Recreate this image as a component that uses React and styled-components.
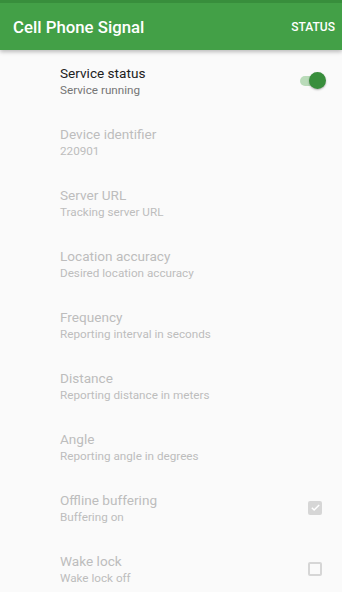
import React from "react";
import styled, { createGlobalStyle } from "styled-components";

const Global = createGlobalStyle`
  html, body { margin: 0; padding: 0; background: #fafafa; }
  body { font-family: Roboto, "Noto Sans", sans-serif; overflow: hidden; }
`;

const Screen = styled.div`
  width: 342px;
  height: 592px;
  background: #fafafa;
  display: flex;
  flex-direction: column;
  overflow: hidden;
`;

const Toolbar = styled.header`
  position: relative;
  z-index: 1;
  height: 50px;
  flex: none;
  background: #43a047;
  border-top: 3px solid #388e3c;
  box-sizing: border-box;
  display: flex;
  align-items: center;
  justify-content: space-between;
  padding: 0 7px 0 13px;
  box-shadow: 0 2px 4px rgba(0, 0, 0, 0.25);
`;

const Title = styled.h1`
  margin: 0;
  color: #ffffff;
  font-size: 16.8px;
  font-weight: 500;
`;

const Action = styled.span`
  color: #ffffff;
  font-size: 12px;
  font-weight: 500;
`;

const List = styled.div`
  display: flex;
  flex-direction: column;
`;

const Row = styled.div`
  height: 61px;
  flex: none;
  display: flex;
  align-items: center;
  padding: 0 16px 0 60px;
`;

const Texts = styled.div`
  flex: 1;
  display: flex;
  flex-direction: column;
  gap: 1px;
  padding-top: 2px;
`;

const RowTitle = styled.div`
  font-size: 13.6px;
  line-height: 17px;
  color: ${(p) => (p.$disabled ? "#bdbdbd" : "#212121")};
`;

const RowSub = styled.div`
  font-size: 11.7px;
  line-height: 15px;
  color: ${(p) => (p.$disabled ? "#bdbdbd" : "#757575")};
`;

const Switch = styled.div`
  position: relative;
  width: 26px;
  height: 20px;
  display: flex;
  align-items: center;
  margin-right: 0;
`;

const Track = styled.div`
  width: 24px;
  height: 10px;
  border-radius: 5px;
  background: #b9dbb9;
`;

const Thumb = styled.div`
  position: absolute;
  right: 0;
  top: 1.5px;
  width: 17px;
  height: 17px;
  border-radius: 50%;
  background: #388e3c;
  box-shadow: 0 1px 2px rgba(0, 0, 0, 0.3);
`;

const Box = styled.div`
  width: 14px;
  height: 14px;
  box-sizing: border-box;
  border-radius: 2px;
  margin-right: 4px;
  display: flex;
  align-items: center;
  justify-content: center;
  background: ${(p) => (p.$checked ? "#d6d6d6" : "transparent")};
  border: ${(p) => (p.$checked ? "none" : "2px solid #d6d6d6")};
`;

const items = [
  { title: "Service status", sub: "Service running", control: "switch" },
  { title: "Device identifier", sub: "220901", disabled: true },
  { title: "Server URL", sub: "Tracking server URL", disabled: true },
  { title: "Location accuracy", sub: "Desired location accuracy", disabled: true },
  { title: "Frequency", sub: "Reporting interval in seconds", disabled: true },
  { title: "Distance", sub: "Reporting distance in meters", disabled: true },
  { title: "Angle", sub: "Reporting angle in degrees", disabled: true },
  { title: "Offline buffering", sub: "Buffering on", disabled: true, control: "checked" },
  { title: "Wake lock", sub: "Wake lock off", disabled: true, control: "unchecked" },
];

export default function App() {
  return (
    <Screen>
      <Global />
      <Toolbar>
        <Title>Cell Phone Signal</Title>
        <Action>STATUS</Action>
      </Toolbar>
      <List>
        {items.map((it) => (
          <Row key={it.title}>
            <Texts>
              <RowTitle $disabled={it.disabled}>{it.title}</RowTitle>
              <RowSub $disabled={it.disabled}>{it.sub}</RowSub>
            </Texts>
            {it.control === "switch" && (
              <Switch>
                <Track />
                <Thumb />
              </Switch>
            )}
            {it.control === "checked" && (
              <Box $checked>
                <svg width="11" height="11" viewBox="0 0 24 24">
                  <path d="M4 12.5l5 5L20 6.5" fill="none" stroke="#fff" strokeWidth="3.2" />
                </svg>
              </Box>
            )}
            {it.control === "unchecked" && <Box />}
          </Row>
        ))}
      </List>
    </Screen>
  );
}
